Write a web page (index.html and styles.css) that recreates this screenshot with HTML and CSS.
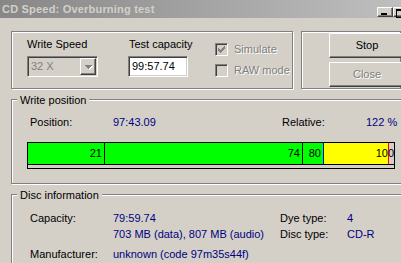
FILE: index.html
```html
<!DOCTYPE html>
<html lang="en">
<head>
    <meta charset="UTF-8">
    <title>CD Speed: Overburning test</title>
    <link rel="stylesheet" href="styles.css">
</head>
<body>
    <div class="titlebar">
        <span class="title">CD Speed: Overburning test</span>
        <div class="caption-btns">
            <span class="cbtn min"><span class="dash"></span></span>
            <span class="cbtn max"><span class="square"></span></span>
        </div>
    </div>

    <div class="content">
        <div class="top-row">
            <!-- Test settings -->
            <div class="group settings">
                <div class="field speed">
                    <div class="caption">Write Speed</div>
                    <div class="combo">
                        <span class="combo-text">32 X</span>
                        <span class="combo-btn">
                            <svg width="8" height="5" viewBox="0 0 8 5" shape-rendering="crispEdges">
                                <path d="M1 1h7v1h-1v1h-1v1h-1v1h-1v-1h-1v-1h-1v-1h-1z" fill="#ffffff"/>
                                <path d="M0 0h7v1h-1v1h-1v1h-1v1h-1v-1h-1v-1h-1v-1h-1z" fill="#808080"/>
                            </svg>
                        </span>
                    </div>
                </div>
                <div class="field capacity">
                    <div class="caption">Test capacity</div>
                    <div class="textbox">99:57.74</div>
                </div>
                <div class="checks">
                    <div class="check disabled">
                        <span class="cb">
                            <svg width="7" height="7" viewBox="0 0 7 7" shape-rendering="crispEdges">
                                <path d="M0 2h1v3h-1z M1 3h1v3h-1z M2 4h1v3h-1z M3 3h1v3h-1z M4 2h1v3h-1z M5 1h1v3h-1z M6 0h1v3h-1z" fill="#808080"/>
                            </svg>
                        </span>
                        Simulate
                    </div>
                    <div class="check disabled">
                        <span class="cb"></span>
                        RAW mode
                    </div>
                </div>
            </div>

            <!-- Actions -->
            <div class="group actions">
                <button class="btn">Stop</button>
                <button class="btn" disabled>Close</button>
            </div>
        </div>

        <!-- Write position -->
        <div class="group wide position-box">
            <span class="group-label">Write position</span>
            <div class="row">
                <span class="k">Position:</span>
                <span class="v v-pos">97:43.09</span>
                <span class="k k-rel">Relative:</span>
                <span class="v">122 %</span>
            </div>
            <div class="bar">
                <div class="track">
                    <div class="seg green" style="width:77px">21</div>
                    <div class="seg green" style="width:198px">74</div>
                    <div class="seg green blue-tick" style="width:21px">80</div>
                    <div class="seg yellow red-tick" style="width:65px"></div>
                    <div class="rest"></div>
                    <span class="end-mark">100</span>
                </div>
                <div class="strip"></div>
            </div>
        </div>

        <!-- Disc information -->
        <div class="group wide disc-box">
            <span class="group-label">Disc information</span>
            <div class="row">
                <span class="k">Capacity:</span>
                <span class="v v-disc">79:59.74</span>
                <span class="k k-dye">Dye type:</span>
                <span class="v">4</span>
            </div>
            <div class="row row-2">
                <span class="k"></span>
                <span class="v v-disc">703 MB (data), 807 MB (audio)</span>
                <span class="k k-dye">Disc type:</span>
                <span class="v">CD-R</span>
            </div>
            <div class="row row-3">
                <span class="k">Manufacturer:</span>
                <span class="v">unknown (code 97m35s44f)</span>
            </div>
        </div>
    </div>
</body>
</html>
```

FILE: styles.css
```css
html, body {
    overflow: hidden;
}
body {
    margin: 0;
    width: 401px;
    height: 263px;
    background: #d4d0c8;
    font-family: "Liberation Sans", Arial, sans-serif;
    font-size: 11px;
    line-height: 13px;
    color: #000000;
}

/* Title bar */
.titlebar {
    display: flex;
    height: 18px;
    padding-left: 2px;
    box-sizing: border-box;
    background: linear-gradient(to right, #878787, #bfbfbf);
    overflow: hidden;
}
.title {
    font-weight: bold;
    letter-spacing: 0.2px;
    color: #d4d0c8;
    padding-top: 3px;
    white-space: nowrap;
}
.caption-btns {
    display: flex;
    margin-left: auto;
    margin-right: -8px;
    padding-top: 7px;
}
.cbtn {
    display: flex;
    width: 16px;
    height: 10px;
    box-sizing: border-box;
    background: #d4d0c8;
    border: 1px solid;
    border-color: #ffffff #404040 #404040 #ffffff;
    box-shadow: inset -1px -1px #808080;
}
.min .dash {
    width: 6px;
    height: 2px;
    margin: 5px 0 0 3px;
    background: #000000;
}
.max .square {
    width: 8px;
    height: 6px;
    margin: 1px 0 0 2px;
    border: 1px solid #000000;
    border-top-width: 2px;
}

/* Layout */
.content {
    padding-left: 11px;
}
.top-row {
    display: flex;
    margin-top: 13px;
}
.group {
    position: relative;
    box-sizing: border-box;
    border: 1px solid #808080;
    box-shadow: inset 1px 1px #ffffff, 1px 1px #ffffff;
}
.group-label {
    position: absolute;
    left: 5px;
    top: -6px;
    padding: 0 3px;
    background: #d4d0c8;
    white-space: nowrap;
}

/* Settings box */
.settings {
    display: flex;
    width: 286px;
    height: 58px;
    padding: 6px 0 0 15px;
}
.field .caption {
    margin-bottom: 5px;
}
.speed {
    width: 101px;
}
.capacity {
    width: 87px;
}
.capacity .caption {
    padding-left: 1px;
}
.combo, .textbox {
    display: flex;
    height: 21px;
    box-sizing: border-box;
    border: 1px solid;
    border-color: #808080 #ffffff #ffffff #808080;
    box-shadow: inset 1px 1px #404040, inset -1px -1px #d4d0c8;
    padding: 1px;
}
.combo {
    width: 71px;
}
.combo-text {
    flex: 1;
    padding: 2px 0 0 2px;
    color: #808080;
}
.combo-btn {
    display: flex;
    align-items: center;
    justify-content: center;
    width: 16px;
    box-sizing: border-box;
    border: 1px solid;
    border-color: #ffffff #404040 #404040 #ffffff;
    box-shadow: inset -1px -1px #808080;
    padding: 1px 0 0 1px;
}
.textbox {
    width: 60px;
    background: #ffffff;
    padding: 3px 0 0 3px;
}
.checks {
    display: flex;
    flex-direction: column;
    gap: 8px;
    padding-top: 5px;
}
.check {
    display: flex;
    align-items: center;
    height: 13px;
    white-space: nowrap;
}
.cb {
    display: flex;
    align-items: center;
    justify-content: center;
    width: 13px;
    height: 13px;
    box-sizing: border-box;
    margin-right: 6px;
    border: 1px solid;
    border-color: #808080 #ffffff #ffffff #808080;
    box-shadow: inset 1px 1px #404040, inset -1px -1px #d4d0c8;
    background: #d4d0c8;
}
.disabled {
    color: #808080;
    text-shadow: 1px 1px 0 #ffffff;
}

/* Action buttons */
.actions {
    display: flex;
    flex-direction: column;
    gap: 4px;
    width: 100px;
    height: 58px;
    margin-left: 8px;
    padding: 1px 0 0 27px;
}
.btn {
    width: 76px;
    height: 25px;
    flex: none;
    padding: 0;
    font: inherit;
    color: #000000;
    background: #d4d0c8;
    border: 1px solid;
    border-color: #ffffff #404040 #404040 #ffffff;
    box-shadow: inset -1px -1px #808080;
}
.btn:disabled {
    color: #808080;
    text-shadow: 1px 1px 0 #ffffff;
}

/* Wide boxes */
.wide {
    width: 400px;
    margin-top: 10px;
    padding-left: 15px;
}
.position-box {
    height: 85px;
    padding-top: 16px;
}
.disc-box {
    height: 80px;
    padding-top: 17px;
}
.row {
    display: flex;
    padding-left: 3px;
    white-space: nowrap;
}
.row-2 {
    margin-top: 3px;
}
.row-3 {
    margin-top: 7px;
}
.k {
    width: 83px;
    flex: none;
}
.v {
    color: #000080;
}
.v-pos {
    width: 169px;
}
.k-rel {
    width: 84px;
}
.v-disc {
    width: 167px;
}
.k-dye {
    width: 67px;
}

/* Progress bar */
.bar {
    display: flex;
    flex-direction: column;
    width: 368px;
    height: 27px;
    margin-top: 13px;
    box-sizing: border-box;
    border: 1px solid #000000;
}
.track {
    position: relative;
    display: flex;
    height: 22px;
    box-sizing: border-box;
    border-bottom: 1px solid #000000;
}
.seg {
    flex: none;
    box-sizing: border-box;
    padding-right: 2px;
    text-align: right;
    line-height: 21px;
    border-right: 1px solid #000000;
}
.green {
    background: #00ff00;
}
.yellow {
    background: #ffff00;
}
.blue-tick {
    border-right-color: #0000ff;
}
.red-tick {
    border-right-color: #ff0000;
}
.rest {
    flex: 1;
}
.end-mark {
    position: absolute;
    right: 0;
    top: 0;
    line-height: 21px;
}
.strip {
    flex: 1;
}
```
